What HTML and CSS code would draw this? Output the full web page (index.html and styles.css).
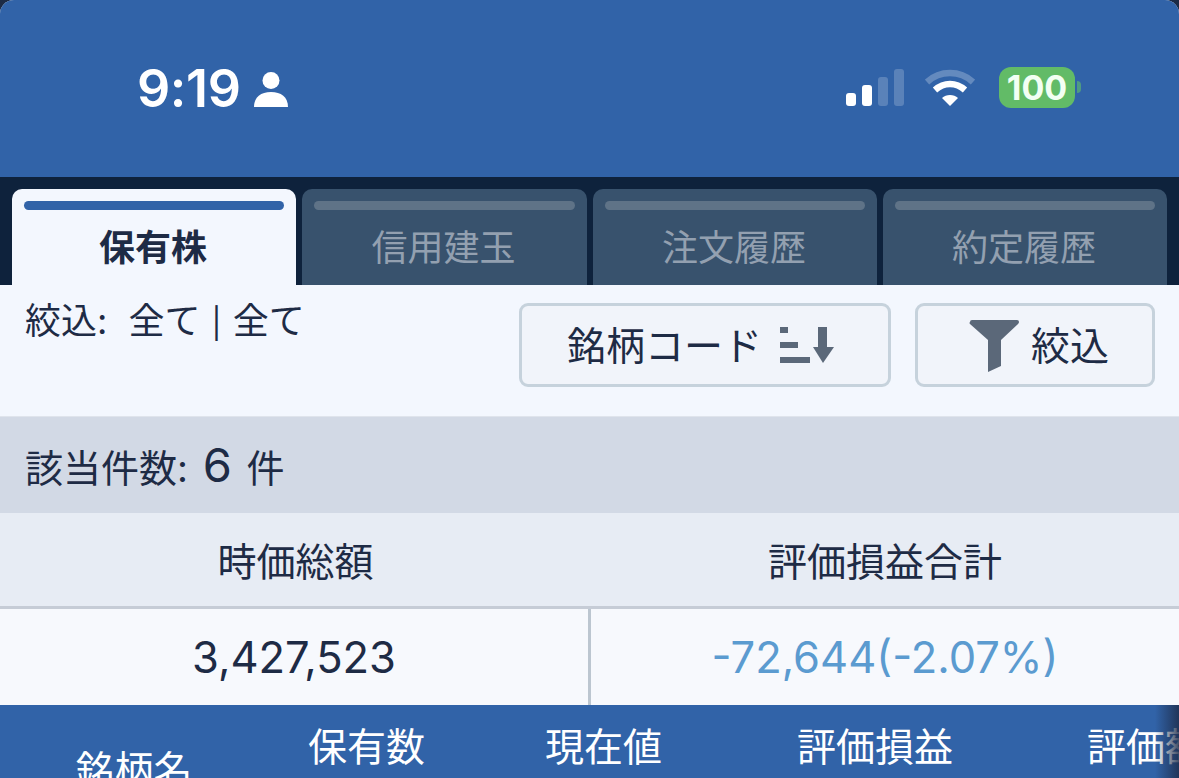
FILE: index.html
```html
<!DOCTYPE html>
<html lang="ja">
<head>
<meta charset="utf-8">
<title>保有株</title>
<link rel="stylesheet" href="styles.css">
</head>
<body>
<div class="app">
  <header class="status">
    <div class="status-left">
      <span class="time">9:19</span>
      <svg class="person" viewBox="0 0 34 36"><circle cx="17" cy="9.500" r="8.500"/><path d="M0 36c0-10 7-15 17-15s17 5 17 15z"/></svg>
    </div>
    <div class="status-right">
      <svg class="signal" viewBox="0 0 60 38"><rect x="1" y="24" width="10" height="13" rx="3" fill="#fff"/><rect x="17" y="16" width="10" height="21" rx="3" fill="#fff"/><rect x="33" y="8" width="10" height="29" rx="3" fill="#fff" opacity=".2"/><rect x="49" y="0" width="10" height="37" rx="3" fill="#fff" opacity=".2"/></svg>
      <svg class="wifi" viewBox="0 0 50 38"><path d="M2 13C15 1 35 1 48 13" fill="none" stroke="#fff" stroke-opacity=".25" stroke-width="6.500"/><path d="M10 21C19 13 31 13 40 21" fill="none" stroke="#fff" stroke-width="6.500"/><path d="M17 29c4-4 12-4 16 0l-8 8z" fill="#fff"/></svg>
      <div class="battery"><span class="battery-body">100</span><span class="battery-cap"></span></div>
    </div>
  </header>
  <nav class="tabs">
    <div class="tab active"><span class="tab-bar"></span><span class="tab-label">保有株</span></div>
    <div class="tab"><span class="tab-bar"></span><span class="tab-label">信用建玉</span></div>
    <div class="tab"><span class="tab-bar"></span><span class="tab-label">注文履歴</span></div>
    <div class="tab"><span class="tab-bar"></span><span class="tab-label">約定履歴</span></div>
  </nav>
  <section class="filters">
    <div class="filter-text"><span class="filter-label">絞込:</span><span>全て <span class="pipe">|</span> 全て</span></div>
    <button class="btn btn-sort">銘柄コード
      <svg class="sort-icon" viewBox="0 0 54 36"><rect x="0" y="0" width="8" height="6"/><rect x="0" y="15" width="18" height="6"/><rect x="0" y="30" width="30" height="6"/><path d="M38 0h9v20h7L43 36 33 20h5z"/></svg>
    </button>
    <button class="btn btn-filter">
      <svg class="funnel-icon" viewBox="0 0 50 52"><path d="M1 2Q1 0 3 0H48Q50 0 50 2Q50 3 49 4L32 20V46L19 52V20L1 4Q0 3 1 2z"/></svg>
      絞込
    </button>
  </section>
  <div class="count">該当件数: <span class="count-num">6</span> 件</div>
  <section class="summary">
    <div class="summary-head">時価総額</div>
    <div class="summary-head">評価損益合計</div>
    <div class="summary-value first">3,427,523</div>
    <div class="summary-value loss">-72,644(-2.07%)</div>
  </section>
  <div class="table-head">
    <div class="col col-name">銘柄名</div>
    <div class="col col-qty">保有数</div>
    <div class="col col-price">現在値</div>
    <div class="col col-pl">評価損益</div>
    <div class="col col-val">評価額</div>
    <div class="fade"></div>
  </div>
</div>
</body>
</html>
```
FILE: styles.css
```css
* { box-sizing: border-box; }
html, body { margin: 0; padding: 0; height: 100%; overflow: hidden; background: #1c2b45; }
body { font-family: "Inter", "Noto Sans CJK JP", sans-serif; color: #1e2b45; }
.app { width: 1179px; height: 778px; background: #f3f7fe; border-radius: 14px 14px 0 0; overflow: hidden; display: flex; flex-direction: column; }

.status { height: 177px; flex: none; background: #3163a8; display: flex; justify-content: space-between; padding: 62px 98px 0 137px; align-items: flex-start; }
.status-left { display: flex; align-items: center; gap: 13px; height: 54px; }
.time { color: #fff; font-size: 52px; font-weight: 600; line-height: 54px; letter-spacing: -.4px; }
.person { width: 34px; height: 36px; fill: #fff; }
.status-right { display: flex; align-items: center; height: 50px; }
.signal { width: 60px; height: 38px; margin-right: 20px; margin-top: 2px; }
.wifi { width: 50px; height: 38px; margin-right: 24px; margin-top: 2px; }
.battery { display: flex; align-items: center; }
.battery-body { width: 76px; height: 41px; border-radius: 12px; background: #62bb67; color: #f2fff3; font-size: 34px; font-weight: 700; line-height: 41px; text-align: center; }
.battery-cap { width: 4px; height: 12px; margin-left: 2px; border-radius: 0 6px 6px 0; background: #4f9b82; }

.tabs { height: 108px; flex: none; background: #0e223c; display: grid; grid-template-columns: 284px 285px 284px 284px; gap: 6px; padding: 12px 12px 0; }
.tab { background: #38526d; border-radius: 10px 10px 0 0; display: flex; flex-direction: column; align-items: center; padding: 12px 12px 0; color: #93a0b0; }
.tab-bar { width: 100%; height: 9px; border-radius: 5px; background: #5f7387; }
.tab-label { font-size: 36px; line-height: 50px; margin: 13px 2px 0 0; font-weight: 400; }
.tab.active { background: #f3f7fe; color: #1e2b45; }
.tab.active .tab-bar { background: #3163a8; }
.tab.active .tab-label { font-weight: 700; }

.filters { height: 132px; flex: none; display: flex; padding: 18px 24px 0 25px; border-bottom: 1px solid #dfe4ec; }
.filter-text { flex: 1; display: flex; gap: 21px; font-size: 36px; line-height: 36px; }
.pipe { font-size: 30px; margin: 0 1px; }
.btn { height: 84px; border: 3px solid #c6d2dc; border-radius: 9px; background: #f1f4fa; color: #1e2b45; font-family: inherit; font-size: 39px; display: flex; align-items: center; justify-content: center; padding: 0 0 4px; }
.btn-sort { width: 372px; gap: 18px; margin-right: 24px; padding-right: 9px; }
.btn-filter { width: 240px; gap: 12px; padding-left: 8px; }
.sort-icon { width: 54px; height: 36px; fill: #5b6879; margin-top: 4px; }
.funnel-icon { width: 50px; height: 52px; fill: #5b6879; margin-top: 6px; }

.count { height: 96px; flex: none; background: #d2d9e5; padding: 0 25px; font-size: 38px; line-height: 96px; }
.count-num { font-size: 47px; margin: 0 4px; }

.summary { flex: none; display: grid; grid-template-columns: 591px 588px; grid-template-rows: 96px 96px; }
.summary-head { background: #e7ecf4; border-bottom: 3px solid #c6ccd6; font-size: 39px; display: flex; align-items: center; justify-content: center; padding-bottom: 2px; }
.summary-value { background: #f7f9fd; font-size: 43.500px; display: flex; align-items: center; justify-content: center; }
.summary-value.first { border-right: 3px solid #bcc6d0; }
.summary-value.loss { color: #5b9bd0; }

.table-head { flex: 1; background: #3163a8; color: #fff; font-size: 39px; position: relative; display: grid; grid-template-columns: 266px 200px 275px 275px 1fr; white-space: nowrap; overflow: hidden; }
.col { text-align: center; line-height: 50px; padding-top: 17px; }
.col-name { padding-top: 40px; padding-left: 2px; }
.col-qty { text-align: left; padding-left: 42px; }
.col-price { text-align: left; padding-left: 79px; }
.col-pl { text-align: left; padding-left: 56px; }
.col-val { text-align: left; padding-left: 71px; }
.fade { position: absolute; top: 0; right: 0; bottom: 0; width: 24px; background: linear-gradient(to right, rgba(30,45,75,0), rgba(30,45,75,.85)); }
```
